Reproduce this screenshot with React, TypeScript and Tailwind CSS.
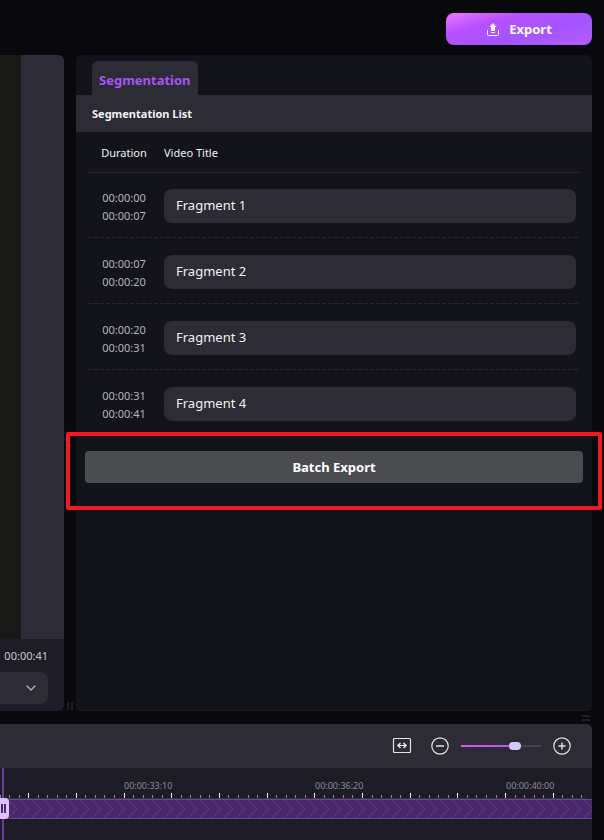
import React, { useState } from 'react';
import { ChevronDown } from 'lucide-react';

interface Segment {
  start: string;
  end: string;
  title: string;
}

const SEGMENTS: Segment[] = [
  { start: '00:00:00', end: '00:00:07', title: 'Fragment 1' },
  { start: '00:00:07', end: '00:00:20', title: 'Fragment 2' },
  { start: '00:00:20', end: '00:00:31', title: 'Fragment 3' },
  { start: '00:00:31', end: '00:00:41', title: 'Fragment 4' },
];

const TIME_LABELS = ['00:00:33:10', '00:00:36:20', '00:00:40:00'];

// Ruler ticks, every fifth one is a major tick
const TICK_STEP = 9.54;
const TICKS = Array.from({ length: 62 }, (_, i) => ({
  x: Math.floor(i * TICK_STEP),
  major: i % 5 === 3,
}));

function ExportIcon() {
  return (
    <svg width="14" height="14" viewBox="0 0 14 14" fill="none" aria-hidden="true">
      <path d="M7 0 L10.5 4 H9 V8 H5 V4 H3.5 Z" fill="#fff" />
      <path d="M5 9.5 H9" stroke="#fff" strokeWidth="1" />
      <path d="M1.5 7 V11.5 Q1.5 12.5 2.5 12.5 H11.5 Q12.5 12.5 12.5 11.5 V7" stroke="#fff" strokeWidth="1" />
    </svg>
  );
}

function PreviewPanel() {
  return (
    <section className="flex w-16 shrink-0 flex-col overflow-hidden rounded-r-md bg-[#1e1c26]">
      <div className="flex flex-1 bg-[#2d2b35]">
        <div className="w-[21px] bg-[#191918]" />
      </div>
      <div className="flex h-[33px] items-center justify-end pr-4 pt-[2px] text-[11px] text-[#c9c8cc]">00:00:41</div>
      <button
        type="button"
        aria-label="More options"
        className="mb-[7px] mr-4 flex h-8 items-center justify-end rounded-r-lg bg-[#2d2b35] pr-[9px]"
      >
        <ChevronDown size={16} strokeWidth={2} className="text-[#b5b3bb]" />
      </button>
    </section>
  );
}

function SegmentTable() {
  const [segments, setSegments] = useState(SEGMENTS);

  const rename = (index: number, title: string) => {
    setSegments(segments.map((s, i) => (i === index ? { ...s, title } : s)));
  };

  return (
    <table className="w-full table-fixed border-separate border-spacing-0">
      <thead>
        <tr className="h-[41px] text-left text-[11px] text-[#f1f1f3]">
          <th className="w-[72px] border-b border-[#25242e] pt-[2px] text-center font-normal">Duration</th>
          <th className="border-b border-[#25242e] px-1 pt-[2px] font-normal">Video Title</th>
        </tr>
      </thead>
      <tbody>
        {segments.map((segment, i) => (
          <tr
            key={segment.start}
            className="h-[66px] bg-[repeating-linear-gradient(to_right,#282731_0_4px,transparent_4px_6px)] bg-[length:100%_1px] bg-[position:0_64px] bg-no-repeat last:bg-none"
          >
            <td className="pt-[2px] text-center text-[11px] leading-[18px] text-[#b4b3b8]">
              <div>{segment.start}</div>
              <div>{segment.end}</div>
            </td>
            <td className="px-1">
              <input
                type="text"
                aria-label={`Title of segment ${i + 1}`}
                value={segment.title}
                onChange={(e) => rename(i, e.target.value)}
                className="block h-[34px] w-full rounded-lg bg-[#2d2b35] px-3 pb-[2px] text-[13px] text-[#f1f1f3] outline-none"
              />
            </td>
          </tr>
        ))}
      </tbody>
    </table>
  );
}

function SegmentationPanel() {
  return (
    <section className="flex-1 rounded-md border-b border-[#1e1c26] bg-[#13131b]">
      <div role="tablist" className="flex px-4 pt-[6px]">
        <button
          type="button"
          role="tab"
          aria-selected="true"
          className="flex h-[34px] items-center rounded-t-md bg-[#2d2b35] px-[7px] pt-[6px] text-[13px] font-bold text-[#a855f7]"
        >
          Segmentation
        </button>
      </div>
      <h2 className="flex h-[37px] items-center bg-[#2d2b35] px-4 pt-[2px] text-[11px] font-bold text-[#f1f1f3]">
        Segmentation List
      </h2>
      <div className="px-3">
        <SegmentTable />
      </div>
      <div className="relative mx-[9px] mt-[14px]">
        <button
          type="button"
          className="flex h-8 w-full items-center justify-center rounded-sm bg-[#4b4c50] pt-[2px] text-[13px] font-bold text-white"
        >
          Batch Export
        </button>
        <div className="pointer-events-none absolute -inset-x-[19px] -bottom-[27px] -top-[19px] rounded-xs border-4 border-[#ed1c24]" />
      </div>
    </section>
  );
}

function ZoomControls() {
  const [zoom, setZoom] = useState(70);

  return (
    <div className="flex h-11 items-center justify-end bg-[#2d2b35] pr-5 text-[#e4e3e8]">
      <button type="button" aria-label="Fit to window">
        <svg width="20" height="20" viewBox="0 0 20 20" fill="none" stroke="currentColor" aria-hidden="true">
          <rect x="1.5" y="2.5" width="17" height="14" rx="1" strokeWidth="1.2" />
          <path d="M8.5 7 L6 9.5 L8.5 12 M11.5 7 L14 9.5 L11.5 12" strokeWidth="1.6" />
          <path d="M6 9.5 H14" strokeWidth="1" />
        </svg>
      </button>
      <button type="button" aria-label="Zoom out" className="ml-[18px]">
        <svg width="20" height="20" viewBox="0 0 20 20" fill="none" stroke="currentColor" aria-hidden="true">
          <circle cx="10" cy="10" r="8.2" strokeWidth="1.2" />
          <path d="M6 10 H14" strokeWidth="1.3" />
        </svg>
      </button>
      <input
        type="range"
        aria-label="Timeline zoom"
        min={0}
        max={100}
        value={zoom}
        onChange={(e) => setZoom(Number(e.target.value))}
        style={{
          backgroundImage: `linear-gradient(to right, #e254e8, #a259ff ${zoom}%, #44424e ${zoom}%)`,
        }}
        className="mx-[11px] h-[2px] w-20 appearance-none [&::-webkit-slider-thumb]:h-2 [&::-webkit-slider-thumb]:w-3 [&::-webkit-slider-thumb]:appearance-none [&::-webkit-slider-thumb]:rounded-[4px] [&::-webkit-slider-thumb]:bg-[#d6c9f5]"
      />
      <button type="button" aria-label="Zoom in">
        <svg width="20" height="20" viewBox="0 0 20 20" fill="none" stroke="currentColor" aria-hidden="true">
          <circle cx="10" cy="10" r="8.2" strokeWidth="1.2" />
          <path d="M6.5 10 H13.5 M10 6.5 V13.5" strokeWidth="1.4" />
        </svg>
      </button>
    </div>
  );
}

function Timeline() {
  return (
    <section className="mr-3 overflow-hidden rounded-tr-md bg-[#1e1c26]">
      <ZoomControls />
      <div className="relative h-[72px] overflow-hidden">
        <div className="flex h-[25px] items-center pl-[124px] pt-[10px] text-[9px] text-[#8c8b93]">
          {TIME_LABELS.map((label) => (
            <span key={label} className="w-[191px] shrink-0">
              {label}
            </span>
          ))}
        </div>
        <svg className="block h-[6px] w-full" aria-hidden="true">
          {TICKS.map(({ x, major }) => (
            <rect
              key={x}
              x={x}
              y={major ? 0 : 2}
              width={1}
              height={major ? 5 : 3}
              fill={major ? '#fff' : '#8c8b93'}
            />
          ))}
          <rect y="5" width="586" height="1" fill="#34343a" />
        </svg>
        <svg className="block h-5 w-full" aria-hidden="true">
          <defs>
            <pattern id="clip-chevrons" width="12" height="20" patternUnits="userSpaceOnUse">
              <rect width="12" height="20" fill="#4a2869" />
              <path
                d="M-4 1 L5 10 L-4 19 M8 1 L17 10 L8 19"
                fill="none"
                stroke="#613b84"
              />
            </pattern>
          </defs>
          <rect width="100%" height="20" fill="url(#clip-chevrons)" />
          <rect width="100%" height="1" fill="#6b478c" />
          <rect y="19" width="100%" height="1" fill="#6b478c" />
        </svg>
        {/* Playhead and the clip's drag handle */}
        <div className="absolute inset-y-0 left-[2px] w-[2px] bg-[#6a3a9a]" />
        <div className="absolute left-0 top-[30px] flex h-[21px] w-[9px] items-center gap-px rounded-r-sm bg-[#d9c2fd] pl-px">
          <span className="h-[9px] w-[2px] bg-[#4a2868]" />
          <span className="h-[9px] w-[2px] bg-[#4a2868]" />
        </div>
      </div>
    </section>
  );
}

export default function App() {
  return (
    <div className="flex min-h-screen flex-col bg-[#09090d] font-['Noto_Sans','Open_Sans',sans-serif]">
      <header className="flex justify-end px-3 pb-[10px] pt-[13px]">
        <button
          type="button"
          className="flex h-8 w-[146px] items-center justify-center gap-[9px] rounded-lg bg-[linear-gradient(165deg,#e879f9_0%,#b750ff_30%,#a454ff_60%,#b45cff_100%)] pt-[2px] text-[13px] font-bold text-white"
        >
          <ExportIcon />
          Export
        </button>
      </header>
      <main className="flex flex-1 pr-3">
        <PreviewPanel />
        <div className="flex w-3 shrink-0 items-end justify-center gap-[2px] pb-px">
          <span className="h-2 w-[2px] bg-[#1e1e24]" />
          <span className="h-2 w-[2px] bg-[#1e1e24]" />
        </div>
        <SegmentationPanel />
      </main>
      <div className="flex h-[13px] flex-col items-end justify-center gap-[2px] pr-[14px]">
        <span className="h-[2px] w-2 bg-[#1e1e24]" />
        <span className="h-[2px] w-2 bg-[#1e1e24]" />
      </div>
      <Timeline />
    </div>
  );
}
